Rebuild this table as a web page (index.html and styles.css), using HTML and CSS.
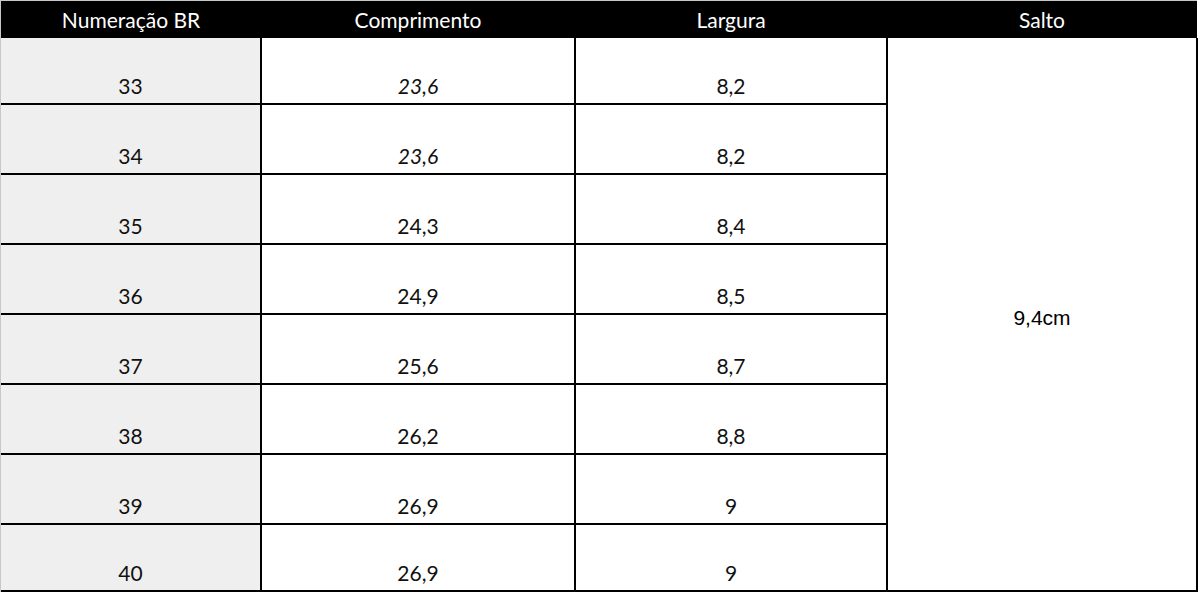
FILE: index.html
```html
<!DOCTYPE html>
<html lang="pt-BR">
<head>
<meta charset="utf-8">
<title>Tabela de medidas</title>
<link rel="stylesheet" href="styles.css">
</head>
<body>
<div class="sheet">
<table class="sizes">
  <colgroup>
    <col class="c1"><col class="c2"><col class="c3"><col class="c4">
  </colgroup>
  <thead>
    <tr class="head">
      <th>Numeração BR</th><th>Comprimento</th><th>Largura</th><th>Salto</th>
    </tr>
  </thead>
  <tbody>
    <tr class="first"><td class="num">33</td><td class="it">23,6</td><td>8,2</td><td class="salto" rowspan="8">9,4cm</td></tr>
    <tr><td class="num">34</td><td class="it">23,6</td><td>8,2</td></tr>
    <tr><td class="num">35</td><td>24,3</td><td>8,4</td></tr>
    <tr><td class="num">36</td><td>24,9</td><td>8,5</td></tr>
    <tr><td class="num">37</td><td>25,6</td><td>8,7</td></tr>
    <tr><td class="num">38</td><td>26,2</td><td>8,8</td></tr>
    <tr><td class="num">39</td><td>26,9</td><td>9</td></tr>
    <tr class="last"><td class="num">40</td><td>26,9</td><td>9</td></tr>
  </tbody>
</table>
</div>
</body>
</html>
```
FILE: styles.css
```css
html, body {
  margin: 0;
  padding: 0;
  background: #ffffff;
}
.sheet {
  padding: 1px 0 0 1px;
  width: 1196px;
  box-shadow: inset 1px 1px 0 #c8c8c8;
}
.sizes {
  border-collapse: collapse;
  table-layout: fixed;
  width: 1196px;
  font-family: Lato, "Open Sans", "Liberation Sans", sans-serif;
  font-size: 21px;
  color: #111111;
}
.c1 { width: 260px; }
.c2 { width: 314px; }
.c3 { width: 312px; }
.c4 { width: 310px; }
.head th {
  background: #000000;
  color: #ffffff;
  font-weight: 400;
  height: 37px;
  padding: 0;
  text-align: center;
  vertical-align: middle;
  line-height: 37px;
  border: 0;
}
.sizes td {
  border: 2px solid #000000;
  height: 70px;
  padding: 0 0 6px 0;
  text-align: center;
  vertical-align: bottom;
  line-height: 22px;
  box-sizing: border-box;
}
.sizes tr.first td {
  border-top: 0;
  height: 66px;
}
.sizes tr.last td {
  height: 67px;
}
.sizes td.num {
  background: #efefef;
  border-left: 0;
}
.sizes td.it {
  font-style: italic;
}
.sizes td.salto {
  vertical-align: middle;
  padding: 8px 0 0 0;
  font-family: "Liberation Sans", Arial, sans-serif;
  font-size: 21px;
  color: #000000;
}
```
